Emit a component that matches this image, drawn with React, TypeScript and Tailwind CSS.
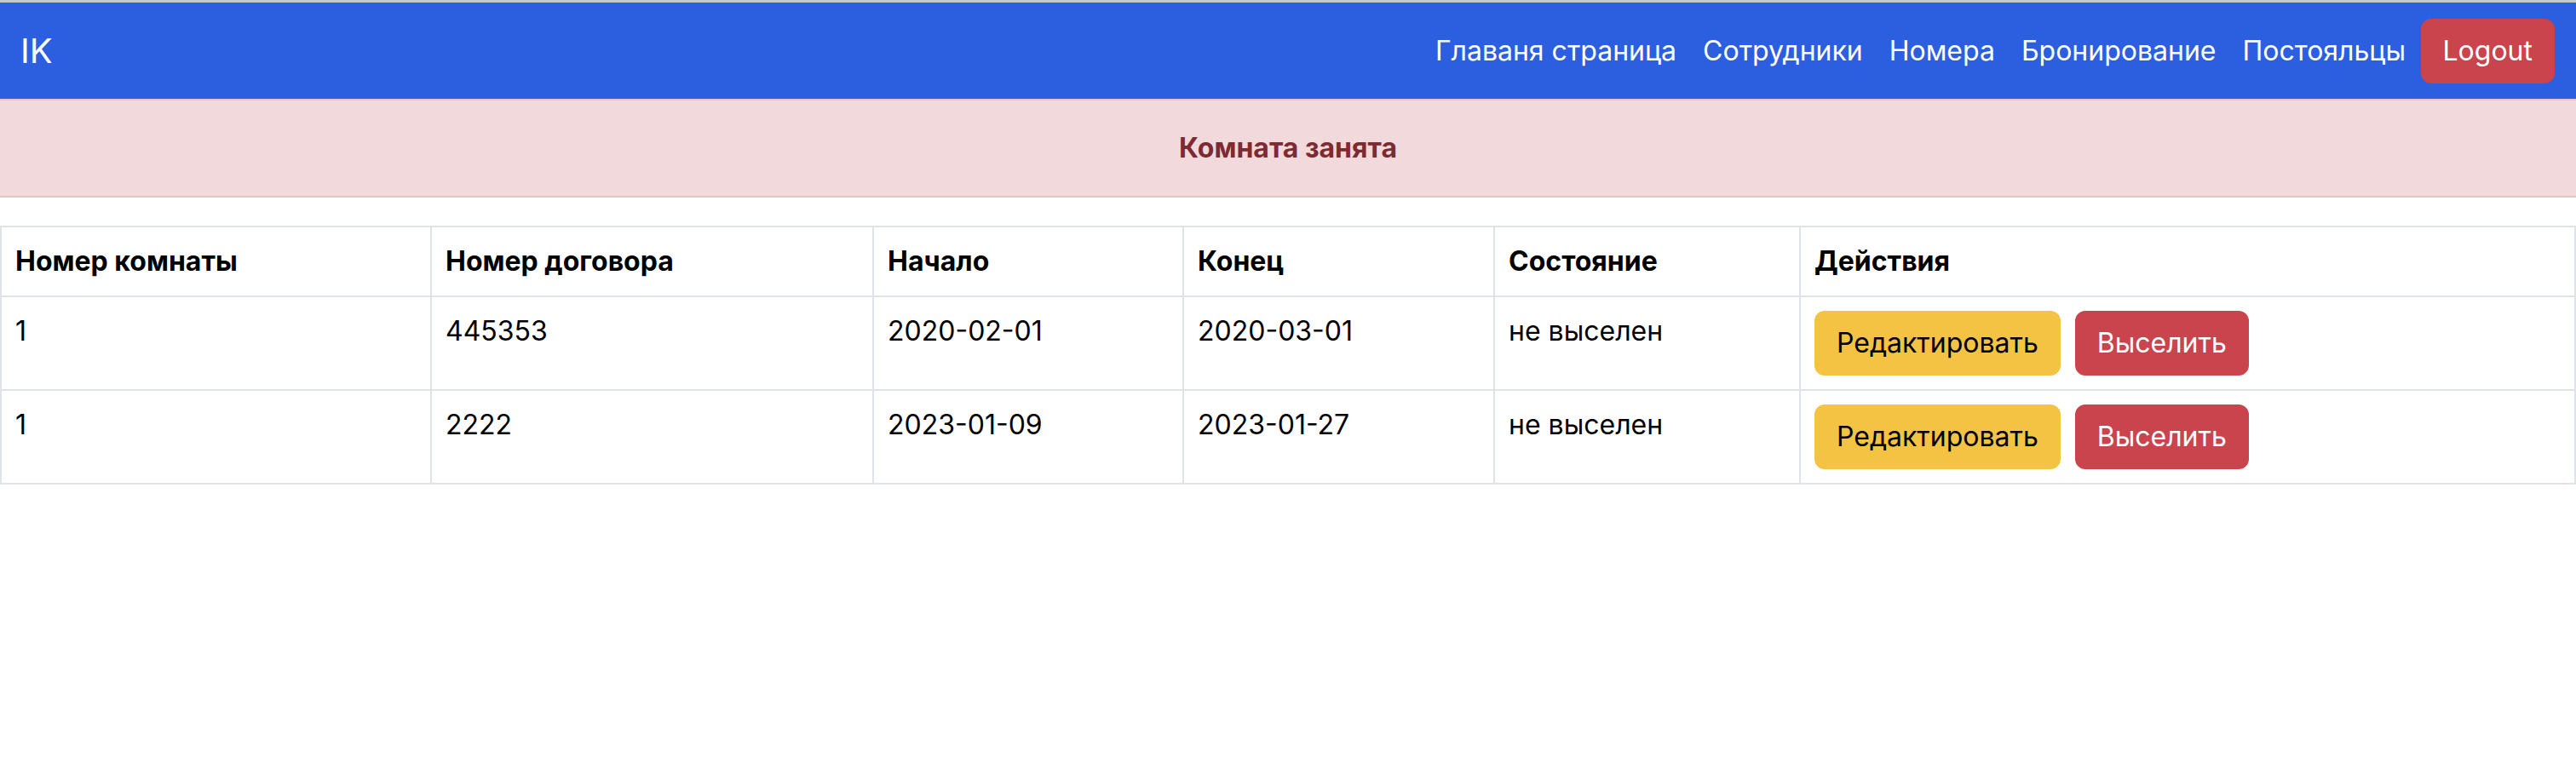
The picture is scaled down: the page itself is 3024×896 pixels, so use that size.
import React from "react";

const rows = [
  { room: "1", contract: "445353", start: "2020-02-01", end: "2020-03-01", state: "не выселен" },
  { room: "1", contract: "2222", start: "2023-01-09", end: "2023-01-27", state: "не выселен" },
];

export default function App() {
  return (
    <div className="w-full min-h-[896px] bg-white font-['Inter','Noto_Sans',sans-serif]">
      <div className="h-[3px] bg-[#c8c8c8]" />
      <nav className="h-[113px] bg-[#2c5fdf] flex items-center justify-between pl-[24px] pr-[25px]">
        <span className="text-white text-[40px] leading-[60px]">IK</span>
        <div className="flex items-center">
          {["Главаня страница", "Сотрудники", "Номера", "Бронирование", "Постояльцы"].map((l) => (
            <a key={l} className="text-white text-[32px] leading-[48px] px-[15.5px]">
              {l}
            </a>
          ))}
          <button className="ml-[2px] bg-[#c9444c] border-2 border-[#c9444c] rounded-[12px] px-[24px] py-[12px] text-white text-[32px] leading-[48px]">
            Logout
          </button>
        </div>
      </nav>
      <div className="bg-[#f1d9dc] border-y-2 border-[#ebc3c7] py-[32px] text-center text-[#7d2a32] font-bold text-[32px] leading-[48px]">
        Комната занята
      </div>
      <table className="mt-[33px] w-full table-fixed border-collapse border-2 border-[#dfe2e6] text-[32px] leading-[48px] text-black">
        <colgroup>
          <col className="w-[505px]" />
          <col className="w-[519px]" />
          <col className="w-[364px]" />
          <col className="w-[365px]" />
          <col className="w-[359px]" />
          <col />
        </colgroup>
        <thead>
          <tr>
            {["Номер комнаты", "Номер договора", "Начало", "Конец", "Состояние", "Действия"].map((h) => (
              <th key={h} className="border-2 border-[#dfe2e6] p-[16px] text-left font-bold align-top">
                {h}
              </th>
            ))}
          </tr>
        </thead>
        <tbody>
          {rows.map((r, i) => (
            <tr key={i}>
              <td className="border-2 border-[#dfe2e6] p-[16px] align-top">{r.room}</td>
              <td className="border-2 border-[#dfe2e6] p-[16px] align-top">{r.contract}</td>
              <td className="border-2 border-[#dfe2e6] p-[16px] align-top">{r.start}</td>
              <td className="border-2 border-[#dfe2e6] p-[16px] align-top">{r.end}</td>
              <td className="border-2 border-[#dfe2e6] p-[16px] align-top">{r.state}</td>
              <td className="border-2 border-[#dfe2e6] p-[16px] align-top">
                <div className="flex gap-[17px]">
                  <button className="bg-[#f4c343] border-2 border-[#f4c343] rounded-[12px] px-[24px] py-[12px] text-black text-[32px] leading-[48px]">
                    Редактировать
                  </button>
                  <button className="bg-[#c9444c] border-2 border-[#c9444c] rounded-[12px] px-[24px] py-[12px] text-white text-[32px] leading-[48px]">
                    Выселить
                  </button>
                </div>
              </td>
            </tr>
          ))}
        </tbody>
      </table>
    </div>
  );
}
